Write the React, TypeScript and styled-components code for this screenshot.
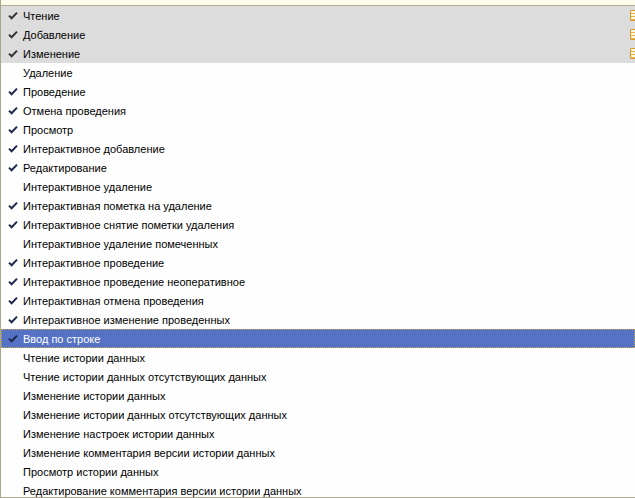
import React from "react";
import styled, { createGlobalStyle } from "styled-components";

const Global = createGlobalStyle`
  html, body { margin: 0; padding: 0; background: #ffffff; }
  body { width: 635px; height: 498px; overflow: hidden; }
`;

const Frame = styled.div`
  width: 635px;
  height: 498px;
  box-sizing: border-box;
  border-left: 1px solid #aaa68c;
  border-bottom: 1px solid #aaa68c;
  background: #fefefe;
  display: flex;
  flex-direction: column;
  overflow: hidden;
  font-family: "Liberation Sans", Arial, sans-serif;
`;

const TopStrip = styled.div`
  height: 5px;
  background: #fdfaea;
  border-bottom: 1px solid #b5ad92;
  flex: none;
`;

const List = styled.div`
  display: flex;
  flex-direction: column;
`;

const Row = styled.div<{ $gray?: boolean; $selected?: boolean }>`
  position: relative;
  height: 19px;
  box-sizing: border-box;
  display: flex;
  align-items: center;
  padding-left: 7px;
  background: ${(p) => (p.$selected ? "#5572c4" : p.$gray ? "#dcdcdc" : "transparent")};
  color: ${(p) => (p.$selected ? "#ffffff" : "#000000")};
  font-size: 11px;
  white-space: nowrap;
  ${(p) =>
    p.$selected
      ? `outline: 1px dotted #c8a64a; outline-offset: -1px;`
      : ""}
`;

const CheckSlot = styled.span`
  width: 15px;
  flex: none;
  display: flex;
  align-items: center;
`;

const Label = styled.span`
  line-height: 19px;
  padding-top: 1px;
`;

const SideIcon = styled.span`
  position: absolute;
  left: 629px;
  top: 4px;
  width: 9px;
  height: 11px;
  box-sizing: border-box;
  border: 1px solid #d89a2a;
  border-radius: 1px;
  background: repeating-linear-gradient(
    to bottom,
    #fff7e0 0px,
    #fff7e0 2px,
    #e8b050 2px,
    #e8b050 3px
  );
`;

const Check = ({ color }: { color: string }) => (
  <svg width="10" height="9" viewBox="0 0 10 9">
    <path d="M1 4.6 L3.6 7.2 L9 1.6" fill="none" stroke={color} strokeWidth="2" />
  </svg>
);

type Item = { t: string; c: boolean };

const items: Item[] = [
  { t: "Чтение", c: true },
  { t: "Добавление", c: true },
  { t: "Изменение", c: true },
  { t: "Удаление", c: false },
  { t: "Проведение", c: true },
  { t: "Отмена проведения", c: true },
  { t: "Просмотр", c: true },
  { t: "Интерактивное добавление", c: true },
  { t: "Редактирование", c: true },
  { t: "Интерактивное удаление", c: false },
  { t: "Интерактивная пометка на удаление", c: true },
  { t: "Интерактивное снятие пометки удаления", c: true },
  { t: "Интерактивное удаление помеченных", c: false },
  { t: "Интерактивное проведение", c: true },
  { t: "Интерактивное проведение неоперативное", c: true },
  { t: "Интерактивная отмена проведения", c: true },
  { t: "Интерактивное изменение проведенных", c: true },
  { t: "Ввод по строке", c: true },
  { t: "Чтение истории данных", c: false },
  { t: "Чтение истории данных отсутствующих данных", c: false },
  { t: "Изменение истории данных", c: false },
  { t: "Изменение истории данных отсутствующих данных", c: false },
  { t: "Изменение настроек истории данных", c: false },
  { t: "Изменение комментария версии истории данных", c: false },
  { t: "Просмотр истории данных", c: false },
  { t: "Редактирование комментария версии истории данных", c: false },
];

export default function App() {
  return (
    <>
      <Global />
      <Frame>
        <TopStrip />
        <List>
          {items.map((it, i) => {
            const gray = i < 3;
            const selected = i === 17;
            return (
              <Row key={i} $gray={gray} $selected={selected}>
                <CheckSlot>
                  {it.c && (
                    <Check color={selected ? "#1b2550" : gray ? "#333333" : "#1e2a4a"} />
                  )}
                </CheckSlot>
                <Label>{it.t}</Label>
                {gray && <SideIcon />}
              </Row>
            );
          })}
        </List>
      </Frame>
    </>
  );
}
